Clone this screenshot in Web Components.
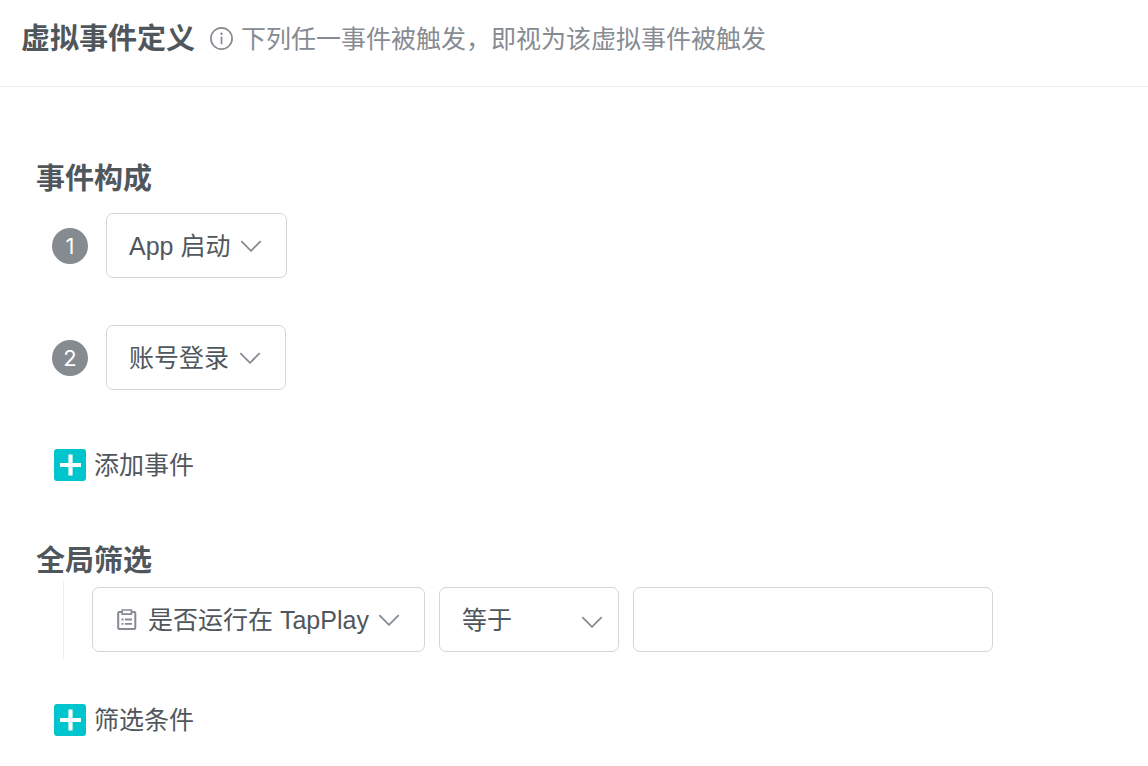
<!DOCTYPE html>
<html lang="zh-CN">
<head>
<meta charset="utf-8">
<meta name="viewport" content="width=device-width, initial-scale=1">
<title>虚拟事件定义</title>
<style>
  body {
    margin: 0;
    background: #fff;
    color: #50575c;
    font: 25px/32px "Liberation Sans", "Noto Sans CJK SC", sans-serif;
    --muted: #868b92;
    --border: #d1d6d7;
    --line: #ebedee;
    --accent: #00c5cd;
  }
</style>
</head>
<body>
<virtual-event-page></virtual-event-page>
<script>
  const define = (name, html, setup) => {
    const template = document.createElement('template');
    template.innerHTML = html;
    customElements.define(name, class extends HTMLElement {
      constructor() {
        super();
        this.attachShadow({ mode: 'open' }).append(template.content.cloneNode(true));
      }
      connectedCallback() {
        if (setup) setup(this, this.shadowRoot);
      }
    });
  };

  define('page-header', `
    <style>
      :host { display: block; border-bottom: 1px solid var(--line); }
      header { display: flex; align-items: center; padding: 20px 21px 28px; }
      h1 { margin: 0 15px 0 0; font-size: 29px; line-height: 38px; font-weight: 700; white-space: nowrap; }
      svg { flex: none; margin-right: 7px; }
      p { margin: 0; color: var(--muted); }
    </style>
    <header>
      <h1><slot name="title"></slot></h1>
      <svg width="24" height="24" viewBox="0 0 24 24" fill="none" stroke="#868b92" aria-hidden="true">
        <circle cx="11.5" cy="11.5" r="10.6" stroke-width="1.7"/>
        <path d="M11.5 9.6v7.6" stroke-width="1.7"/>
        <circle cx="11.5" cy="6.8" r="1.2" fill="#868b92" stroke="none"/>
      </svg>
      <p><slot></slot></p>
    </header>`);

  define('form-section', `
    <style>
      :host { display: block; }
      h2 { margin: 0; font-size: 29px; line-height: 40px; font-weight: 700; }
    </style>
    <section>
      <h2><slot name="heading"></slot></h2>
      <slot></slot>
    </section>`);

  define('drop-down', `
    <style>
      :host { display: inline-grid; align-items: center; }
      select, svg { grid-area: 1 / 1; }
      select {
        appearance: none;
        box-sizing: border-box;
        width: 100%;
        height: 65px;
        margin: 0;
        padding: 0 55px 0 22px;
        border: 1px solid var(--border);
        border-radius: 7px;
        background: #fff;
        color: inherit;
        font: inherit;
      }
      svg { pointer-events: none; }
      .chevron { justify-self: end; margin-right: 25px; }
      .clipboard { display: none; justify-self: start; margin-left: 25px; }
      :host([icon]) select { padding-left: 55px; }
      :host([icon]) .clipboard { display: block; }
      :host([wide]) { width: 180px; }
      :host([wide]) .chevron { margin: 4px 16px 0 0; }
    </style>
    <select></select>
    <svg class="clipboard" width="20" height="22" viewBox="0 0 20 22" fill="none" stroke="#868b92" aria-hidden="true">
      <path d="M5 3H2.2Q1.2 3 1.2 4V19Q1.2 20 2.2 20H17.3Q18.3 20 18.3 19V4Q18.3 3 17.3 3H14.5" stroke-width="2"/>
      <path d="M5.2 1h9.2v4.2h-9.2z" stroke-width="1.7"/>
      <path d="M4.5 10.5h2M8 10.5h7M4.5 14.8h2M8 14.8h7" stroke-width="1.8"/>
    </svg>
    <svg class="chevron" width="22" height="12" viewBox="0 0 22 12" fill="none" stroke="#868b92" stroke-width="1.8" aria-hidden="true">
      <path d="M1.3 1.2L11 10.8L20.7 1.2"/>
    </svg>`,
    (host, root) => {
      const select = root.querySelector('select');
      select.setAttribute('aria-label', host.getAttribute('label'));
      select.replaceChildren(new Option(host.getAttribute('value')));
    });

  define('event-row', `
    <style>
      :host { display: flex; align-items: center; gap: 18px; padding-left: 16px; }
      .number {
        display: grid;
        place-items: center;
        flex: none;
        width: 36px;
        height: 36px;
        border-radius: 50%;
        background: var(--muted);
        color: #fff;
        font-family: Inter, "Liberation Sans", sans-serif;
        font-size: 22px;
        line-height: 36px;
      }
    </style>
    <span class="number"><slot name="number"></slot></span>
    <slot></slot>`);

  define('add-button', `
    <style>
      :host { display: block; padding-left: 18px; }
      button {
        display: flex;
        align-items: center;
        gap: 8px;
        padding: 0;
        border: 0;
        background: none;
        color: inherit;
        font: inherit;
        cursor: pointer;
      }
    </style>
    <button type="button">
      <svg width="32" height="32" viewBox="0 0 32 32" aria-hidden="true">
        <rect width="32" height="32" rx="3" fill="#00c5cd"/>
        <path d="M16.5 5.5v21M6 16h21" stroke="#fff" stroke-width="4.2"/>
      </svg>
      <span><slot></slot></span>
    </button>`);

  define('filter-group', `
    <style>
      :host {
        display: flex;
        gap: 14px;
        margin-left: 27px;
        padding: 6px 0 7px 28px;
        border-left: 1px solid var(--line);
      }
      input {
        box-sizing: border-box;
        flex: 0 1 360px;
        min-width: 0;
        height: 65px;
        padding: 0 22px;
        border: 1px solid var(--border);
        border-radius: 7px;
        background: #fff;
        color: inherit;
        font: inherit;
      }
    </style>
    <slot></slot>
    <input type="text" aria-label="筛选值">`);

  define('virtual-event-page', `
    <style>
      :host { display: block; }
      main { padding: 72px 36px 24px; }
      .events { display: grid; gap: 47px; margin: 14px 0 59px; }
      .filters { margin-top: 60px; }
      filter-group { margin-bottom: 45px; }
    </style>
    <page-header><span slot="title">虚拟事件定义</span>下列任一事件被触发，即视为该虚拟事件被触发</page-header>
    <main>
      <form-section>
        <span slot="heading">事件构成</span>
        <div class="events">
          <event-row><span slot="number">1</span><drop-down label="事件 1" value="App 启动"></drop-down></event-row>
          <event-row><span slot="number">2</span><drop-down label="事件 2" value="账号登录"></drop-down></event-row>
        </div>
        <add-button>添加事件</add-button>
      </form-section>
      <form-section class="filters">
        <span slot="heading">全局筛选</span>
        <filter-group>
          <drop-down icon label="筛选属性" value="是否运行在 TapPlay"></drop-down>
          <drop-down wide label="条件" value="等于"></drop-down>
        </filter-group>
        <add-button>筛选条件</add-button>
      </form-section>
    </main>`);
</script>
</body>
</html>
